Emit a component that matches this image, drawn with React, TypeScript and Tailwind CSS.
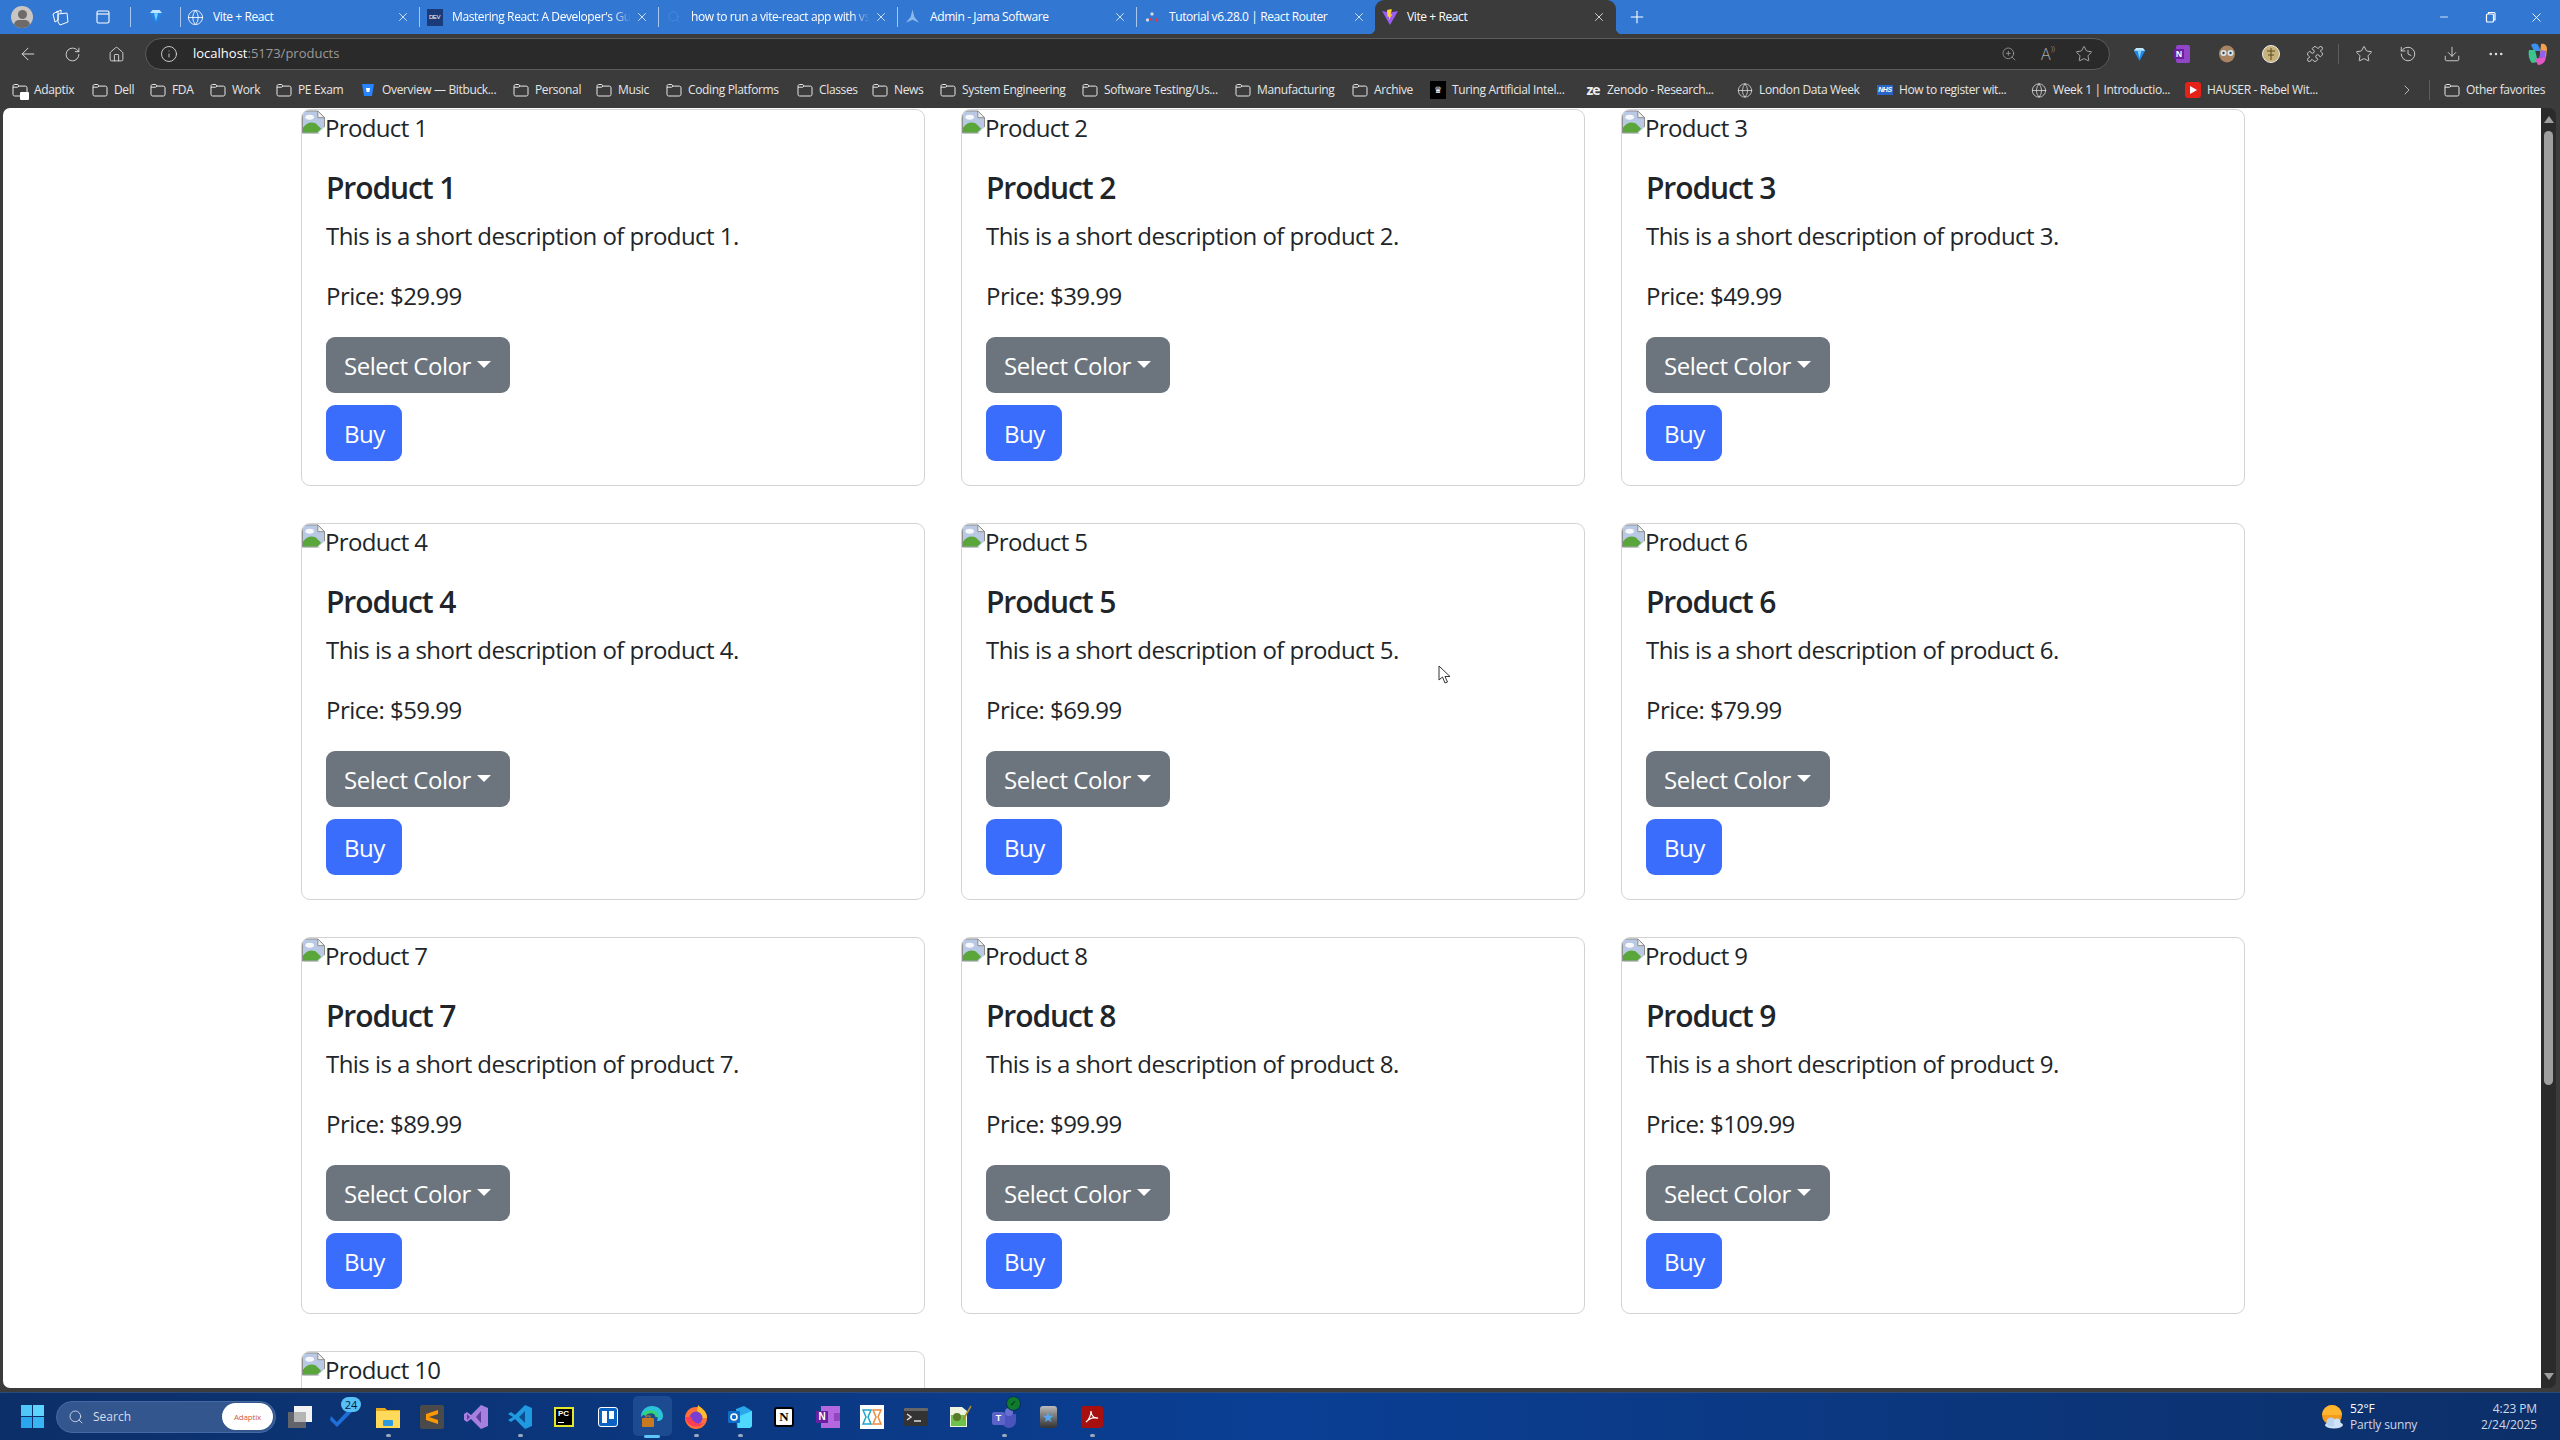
import React from "react";
import { ArrowLeft, RotateCw, Home, Info, ZoomIn, Star, Puzzle, History, Download, MoreHorizontal, ChevronRight, Plus, X, Minus, Search, Globe } from "lucide-react";

const Folder = ({ c = "#e8e8e8" }: { c?: string }) => (
  <svg width="16" height="16" viewBox="0 0 16 16" fill="none" stroke={c} strokeWidth="1"><path d="M1 4.2C1 3 1.8 2.5 2.8 2.5h3l1.4 1.6h6c1 0 1.8.6 1.8 1.6v6.8c0 1-.8 1.5-1.8 1.5H2.8c-1 0-1.8-.5-1.8-1.5z" /><path d="M1 5.2h4.6l1.6-1.1" /></svg>
);
const Pin = ({ s = 18 }: { s?: number }) => (
  <svg width={s} height={s} viewBox="0 0 18 18"><path d="M3 5l2.5-3h7L15 5l-6 11z" fill="#1f86e8" /><path d="M5.5 2h7L15 5H3z" fill="#bfe6ff" /><path d="M7 5.2h4L9 13z" fill="#7fd0ff" /></svg>
);
const Vite = () => (
  <svg width="18" height="18" viewBox="0 0 18 18"><path d="M1 3l8 1.4L17 3 9 17z" fill="#9a5cf5" /><path d="M10.5 1L6 2l.5 7 1.6-.4-.4 3.6 3.6-6-2 .4 1.4-4z" fill="#ffd02e" /></svg>
);

const tabs = [
  { t: "Vite + React", i: <Globe size={17} strokeWidth={1.2} color="#fff" />, fade: false },
  { t: "Mastering React: A Developer's Guide to Routing", i: <div className="w-[16px] h-[17px] bg-[#1b3a78] text-white text-[6px] flex items-center justify-center font-['Liberation_Sans',sans-serif]">DEV</div>, fade: true },
  { t: "how to run a vite-react app with vs code", i: <Search size={14} strokeWidth={1.2} color="#4d8fe0" />, fade: true },
  { t: "Admin - Jama Software", i: <svg width="18" height="18" viewBox="0 0 18 18"><path d="M9 1l2 8 5 6-7-3-7 3 5-6z" fill="#8db9ea" /></svg>, fade: false },
  { t: "Tutorial v6.28.0 | React Router", i: <svg width="16" height="16" viewBox="0 0 16 16"><circle cx="8" cy="5" r="1.7" fill="#d3d7de" /><circle cx="3.5" cy="11" r="1.7" fill="#d3d7de" /><circle cx="12.5" cy="11" r="1.7" fill="#e5383b" /><path d="M6 9.5l2 2" stroke="#e5383b" strokeWidth="1.8" /></svg>, fade: false },
];

const bookmarks = [
  { t: "Adaptix", w: "w-[80px]", i: <span className="relative block w-[16px] h-[16px]"><Folder /><span className="absolute -right-[1px] -bottom-[2px] w-[9px] h-[8px] bg-white rounded-[1px]" /></span> },
  { t: "Dell", w: "w-[58px]", i: <Folder /> },
  { t: "FDA", w: "w-[60px]", i: <Folder /> },
  { t: "Work", w: "w-[66px]", i: <Folder /> },
  { t: "PE Exam", w: "w-[84px]", i: <Folder /> },
  { t: "Overview — Bitbuck...", w: "w-[153px]", i: <svg width="14" height="16" viewBox="0 0 14 16"><path d="M1 2h12l-2 12H3z" fill="#2684ff" /><path d="M5 6h4l-.6 4H5.6z" fill="#fff" /></svg> },
  { t: "Personal", w: "w-[83px]", i: <Folder /> },
  { t: "Music", w: "w-[70px]", i: <Folder /> },
  { t: "Coding Platforms", w: "w-[131px]", i: <Folder /> },
  { t: "Classes", w: "w-[75px]", i: <Folder /> },
  { t: "News", w: "w-[68px]", i: <Folder /> },
  { t: "System Engineering", w: "w-[142px]", i: <Folder /> },
  { t: "Software Testing/Us...", w: "w-[153px]", i: <Folder /> },
  { t: "Manufacturing", w: "w-[117px]", i: <Folder /> },
  { t: "Archive", w: "w-[78px]", i: <Folder /> },
  { t: "Turing Artificial Intel...", w: "w-[155px]", i: <div className="w-[16px] h-[18px] bg-black flex items-center justify-center text-white text-[9px]">♛</div> },
  { t: "Zenodo - Research...", w: "w-[152px]", i: <span className="text-[#eee] text-[14px] font-bold tracking-[-1px] leading-none">ze</span> },
  { t: "London Data Week", w: "w-[140px]", i: <Globe size={17} strokeWidth={1.1} color="#e8e8e8" /> },
  { t: "How to register wit...", w: "w-[154px]", i: <div className="w-[16px] h-[10px] bg-[#2a66c8] text-white italic font-bold text-[7px] leading-[10px] text-center font-['Liberation_Sans',sans-serif]">NHS</div> },
  { t: "Week 1 | Introductio...", w: "w-[154px]", i: <Globe size={17} strokeWidth={1.1} color="#e8e8e8" /> },
  { t: "HAUSER - Rebel Wit...", w: "w-[160px]", i: <div className="w-[16px] h-[16px] rounded-[3px] bg-[#e62117] flex items-center justify-center"><svg width="7" height="8" viewBox="0 0 7 8"><path d="M0 0l7 4-7 4z" fill="#fff" /></svg></div> },
];

const Tile = ({ children }: { children: React.ReactNode }) => <div className="relative w-[44px] h-[48px] flex items-center justify-center shrink-0">{children}</div>;
const Dot = () => <span className="absolute bottom-[4px] left-[20px] w-[5px] h-[3px] rounded-full bg-[#9aa7bd]" />;

const taskIcons: React.ReactNode[] = [
  <Tile key="tv"><svg width="26" height="24" viewBox="0 0 26 24"><rect x="7" y="1" width="18" height="16" fill="#f2f2f2" /><rect x="1" y="7" width="18" height="16" fill="#6a6a6a" opacity=".9" /><rect x="7" y="7" width="12" height="10" fill="#b5b5b5" /></svg></Tile>,
  <Tile key="chk"><svg width="22" height="20" viewBox="0 0 22 20" className="absolute left-[8px] top-[14px]"><path d="M1 9l6 6L18 3l4 2L7 20 0 13z" fill="#1f6fd6" /></svg><div className="absolute left-[19px] top-[4px] w-[20px] h-[15px] rounded-[8px] bg-[#58c0f5] text-[#0a1c3a] text-[11px] leading-[15px] text-center font-['Open_Sans',sans-serif]">24</div></Tile>,
  <Tile key="fold"><svg width="24" height="22" viewBox="0 0 24 22"><path d="M0 2h9l2 2h13v18H0z" fill="#e8a91e" /><path d="M0 5h24v17H0z" fill="#ffd95a" /><rect x="7" y="14" width="10" height="6" rx="1" fill="#2a9be0" /></svg><Dot /></Tile>,
  <Tile key="sub"><div className="w-[24px] h-[24px] bg-[#4a4a4a] rounded-[2px] flex items-center justify-center"><svg width="14" height="16" viewBox="0 0 14 16"><path d="M1 5l12-4v4L1 9zM1 7l12 4v4L1 11z" fill="#ff9800" /></svg></div></Tile>,
  <Tile key="vs"><svg width="24" height="24" viewBox="0 0 24 24"><path d="M17 0l7 3v18l-7 3L7 14l-4 3-3-2V9l3-2 4 3z" fill="#a77fe0" /><path d="M17 6l-5 6 5 6zM3 9v6l3-3z" fill="#5e3f9a" /></svg></Tile>,
  <Tile key="code"><svg width="24" height="24" viewBox="0 0 24 24"><path d="M17 0l7 3v18l-7 3L7 14l-4 3-3-2 5-3-5-3 3-2 4 3z" fill="#1f9ae0" /><path d="M17 6l-6 6 6 6z" fill="#0c4f93" /></svg><Dot /></Tile>,
  <Tile key="pc"><div className="w-[20px] h-[20px] bg-black border-[2px] border-[#e5e82a] relative text-white text-[8px] leading-[10px] pl-[2px] font-bold font-['Liberation_Sans',sans-serif]">PC<span className="absolute left-[2px] bottom-[2px] w-[6px] h-[1px] bg-white" /></div></Tile>,
  <Tile key="tr"><div className="w-[20px] h-[20px] rounded-[3px] border border-white bg-[#0a62c4] flex gap-[2px] p-[3px]"><span className="w-[5px] h-[12px] bg-white" /><span className="w-[5px] h-[8px] bg-white" /></div></Tile>,
  <Tile key="edge"><div className="absolute left-[3px] top-[3px] w-[39px] h-[40px] rounded-[5px] bg-[#1d4b92]" /><svg width="24" height="24" viewBox="0 0 24 24" className="relative"><path d="M1 12C1 5 6 1 12 1s11 4 11 10c0 3-2 5-6 5 2-5-1-9-6-9S4 9 1 12z" fill="#2bc3d8" /><path d="M4 10c3-4 12-5 13 2" fill="none" stroke="#35d26f" strokeWidth="3" /><rect x="2" y="13" width="12" height="9" rx="1" fill="#c97a1e" /><rect x="6" y="11" width="4" height="3" fill="none" stroke="#c97a1e" /></svg><span className="absolute bottom-[3px] left-[14px] w-[16px] h-[3px] rounded-full bg-[#5fc5f5]" /></Tile>,
  <Tile key="ff"><svg width="24" height="24" viewBox="0 0 24 24"><circle cx="12" cy="13" r="11" fill="#ff7139" /><path d="M14 0c3 3 9 6 9 13h-6c0-4-2-5-4-7z" fill="#ffbd2e" /><circle cx="12" cy="13" r="6.5" fill="#7a3fd0" /><path d="M1 12c2 9 12 13 19 6-5 2-11 0-13-6z" fill="#ff3d55" /></svg><Dot /></Tile>,
  <Tile key="ol"><svg width="24" height="24" viewBox="0 0 24 24"><path d="M8 4l8-3 8 5v15l-2 2H9z" fill="#28a8ea" /><path d="M9 12l15-6v15l-2 2H10z" fill="#50d9ff" /><rect x="0" y="6" width="12" height="12" rx="1" fill="#0f6cc9" /><circle cx="6" cy="12" r="3" fill="none" stroke="#fff" strokeWidth="1.6" /></svg><Dot /></Tile>,
  <Tile key="n"><div className="w-[20px] h-[20px] rounded-[3px] bg-white border-[2px] border-black text-black text-[13px] leading-[16px] text-center font-bold font-['Liberation_Serif',serif]">N</div></Tile>,
  <Tile key="on"><div className="relative w-[24px] h-[22px]"><div className="absolute right-0 top-0 w-[19px] h-[22px] bg-[#b468e0]" /><div className="absolute right-0 top-[7px] w-[6px] h-[8px] bg-[#9346c0]" /><div className="absolute left-0 top-[5px] w-[12px] h-[12px] bg-[#6a1fa0] text-white text-[10px] leading-[12px] text-center font-bold font-['Liberation_Sans',sans-serif]">N</div></div></Tile>,
  <Tile key="zm"><div className="w-[24px] h-[24px] bg-white flex items-center justify-center"><svg width="20" height="18" viewBox="0 0 20 18" fill="none" strokeWidth="1.5"><path d="M1 2h8l-3 7 3 7H1l3-7z" stroke="#1ea7c7" /><path d="M19 2h-8l3 7-3 7h8l-3-7z" stroke="#f08a3c" /></svg></div></Tile>,
  <Tile key="term"><div className="w-[24px] h-[18px] bg-[#333] rounded-[1px] border-t-[3px] border-[#666] relative"><svg width="24" height="14" viewBox="0 0 24 14" className="absolute top-0 left-0" fill="none" stroke="#ddd" strokeWidth="1.5"><path d="M3 3l4 3-4 3M10 10h7" /></svg></div></Tile>,
  <Tile key="npp"><svg width="24" height="24" viewBox="0 0 24 24"><path d="M2 2h12l5 4v16H2z" fill="#eef3e0" /><rect x="3" y="10" width="15" height="11" fill="#6cc24a" /><circle cx="9" cy="12" r="4" fill="#5a7a2a" /><path d="M23 1L15 15" stroke="#b08a2a" strokeWidth="1.6" /></svg></Tile>,
  <Tile key="teams"><div className="relative w-[24px] h-[24px]"><div className="absolute right-0 top-[9px] w-[14px] h-[14px] rounded-b-[7px] bg-[#4b53bc]" /><div className="absolute right-[3px] top-[3px] w-[8px] h-[8px] rounded-full bg-[#6871d0]" /><div className="absolute left-0 top-[7px] w-[13px] h-[13px] rounded-[2px] bg-[#5b62c8] text-white text-[9px] leading-[13px] text-center font-bold font-['Liberation_Sans',sans-serif]">T</div></div><div className="absolute left-[24px] top-[3px] w-[15px] h-[15px] rounded-full bg-[#0f7b2c] border border-[#062a5c] flex items-center justify-center text-[#0a0f0a] text-[8px]">✓</div><Dot /></Tile>,
  <Tile key="star"><div className="w-[17px] h-[22px] rounded-[3px] bg-gradient-to-b from-[#bcbcbc] to-[#333] flex items-center justify-center text-[#56a8f0] text-[14px] leading-none">★</div></Tile>,
  <Tile key="pdf"><div className="w-[22px] h-[22px] rounded-[3px] bg-[#a80f0f] flex items-center justify-center"><svg width="14" height="14" viewBox="0 0 14 14" fill="none" stroke="#fff" strokeWidth="1.2"><path d="M1 12c3-2 5-7 5-11 0 4 3 8 7 7-4-1-9 1-12 4z" /></svg></div><Dot /></Tile>,
];

const names = ["1", "2", "3", "4", "5", "6", "7", "8", "9", "10"];
const prices = ["$29.99", "$39.99", "$49.99", "$59.99", "$69.99", "$79.99", "$89.99", "$99.99", "$109.99", ""];

const Broken = () => (
  <svg width="23" height="24" viewBox="0 0 24 24" className="shrink-0">
    <path d="M.5.5h16l7 7v11l-5 5H.5z" fill="#b9c9e4" stroke="#8a8a8a" />
    <path d="M16.500.5v7h7z" fill="#f2f2f2" stroke="#8a8a8a" />
    <ellipse cx="8" cy="7" rx="4.500" ry="2.600" fill="#f6f8fc" />
    <path d="M1 23v-5c4-6 11-7 15-3l4 4-4 4z" fill="#5aa63a" />
    <path d="M16 24l8-7v7z" fill="#fff" />
  </svg>
);

const Card = ({ n, p }: { n: string; p: string }) => (
  <div className="h-[377px] border border-[#d3d3d3] rounded-[9px] bg-white text-[#212529] overflow-hidden">
    <div className="flex h-[36px] text-[24px] leading-[36px] tracking-[-0.65px]">
      <Broken />
      <span>Product {n}</span>
    </div>
    <div className="p-[24px]">
      <h5 className="text-[30px] leading-[36px] font-semibold mb-[12px] tracking-[-1.1px]">Product {n}</h5>
      <p className="text-[24px] leading-[36px] mb-[24px] tracking-[-0.55px]">This is a short description of product {n}.</p>
      <p className="text-[24px] leading-[36px] mb-[23px] tracking-[-0.55px]">Price: {p}</p>
      <div className="flex items-center w-[184px] h-[56px] rounded-[9px] bg-[#6c757d] text-white text-[24px] pl-[18px] pt-[1px] tracking-[-0.45px] mb-[12px]">
        Select Color
        <span className="ml-[6px] -mt-[2px] w-0 h-0 border-x-[7px] border-x-transparent border-t-[7px] border-t-white" />
      </div>
      <div className="flex items-center w-[76px] h-[56px] rounded-[9px] bg-[#3b6dfd] text-white text-[24px] pl-[18px] pt-[1px] tracking-[-0.45px]">Buy</div>
    </div>
  </div>
);

export default function App() {
  return (
    <div className="relative w-[2560px] h-[1440px] overflow-hidden flex flex-col bg-[#3b3b3b] font-['Open_Sans','Noto_Sans',sans-serif]">
      {/* title bar */}
      <div className="h-[34px] bg-[#3277d2] flex items-center text-white text-[12px] tracking-[-0.4px] shrink-0">
        <div className="w-[44px] flex justify-center"><div className="w-[22px] h-[22px] rounded-full bg-[#c9c5c2] overflow-hidden relative"><span className="absolute left-[7px] top-[4px] w-[9px] h-[9px] rounded-full bg-[#6d6a68]" /><span className="absolute left-[3px] top-[14px] w-[16px] h-[10px] rounded-full bg-[#6d6a68]" /></div></div>
        <div className="w-[32px] flex justify-center"><svg width="17" height="17" viewBox="0 0 17 17" fill="none" stroke="#fff" strokeWidth="1"><path d="M1 5l5-3v9l-3 2zM4 3.5l5-2.5 0 3M6 5l9-1 1 9-8 3-2-3z" /></svg></div>
        <div className="w-[54px] flex justify-center"><svg width="14" height="14" viewBox="0 0 14 14" fill="none" stroke="#fff" strokeWidth="1.1"><rect x="1" y="1" width="12" height="12" rx="1.5" /><path d="M1 4h12" /></svg></div>
        <div className="w-[1px] h-[20px] bg-[#a9c6ee]" />
        <div className="w-[49px] flex justify-center"><Pin /></div>
        <div className="flex">
          {tabs.map((t) => (
            <div key={t.t} className="w-[239px] h-[20px] border-l border-[#a9c6ee] flex items-center pl-[6px] pr-[9px]">
              <div className="w-[17px] flex justify-center shrink-0">{t.i}</div>
              <div className={t.fade ? "ml-[9px] flex-1 overflow-hidden whitespace-nowrap [mask-image:linear-gradient(to_right,black_90%,transparent)]" : "ml-[9px] flex-1 overflow-hidden whitespace-nowrap"}>{t.t}</div>
              <X size={14} strokeWidth={1.3} className="ml-[4px] shrink-0" />
            </div>
          ))}
        </div>
        <div className="relative w-[241px] h-[34px] mt-[0px] bg-[#3b3b3b] rounded-t-[9px] flex items-center pl-[6px] pr-[10px] self-end">
          <span className="absolute -left-[6px] bottom-0 w-[6px] h-[6px] bg-[radial-gradient(circle_at_0_0,transparent_6px,#3b3b3b_6.5px)]" />
          <span className="absolute -right-[6px] bottom-0 w-[6px] h-[6px] bg-[radial-gradient(circle_at_100%_0,transparent_6px,#3b3b3b_6.5px)]" />
          <div className="w-[18px] flex justify-center shrink-0"><Vite /></div>
          <div className="ml-[8px] flex-1 whitespace-nowrap">Vite + React</div>
          <X size={14} strokeWidth={1.3} className="shrink-0" />
        </div>
        <div className="w-[40px] ml-[1px] flex justify-center"><Plus size={20} strokeWidth={1.3} /></div>
        <div className="flex-1" />
        <div className="flex items-center pr-[16px]">
          <Minus size={12} strokeWidth={1.6} />
          <svg width="12" height="12" viewBox="0 0 12 12" fill="none" stroke="#fff" strokeWidth="1.2" className="ml-[34px]"><rect x="2.500" y="3" width="7" height="8" rx="1" /><path d="M4.500 3V1.500h5.500a1 1 0 0 1 1 1V9H9.500" /></svg>
          <X size={15} strokeWidth={1.4} className="ml-[33px]" />
        </div>
      </div>

      {/* toolbar */}
      <div className="h-[36px] flex items-center text-[#e6e6e6] shrink-0 pl-[6px] pt-[4px]">
        <div className="w-[44px] flex justify-center"><ArrowLeft size={20} strokeWidth={1.1} /></div>
        <div className="w-[44px] flex justify-center"><RotateCw size={17} strokeWidth={1.2} /></div>
        <div className="w-[44px] flex justify-center"><Home size={17} strokeWidth={1.2} /></div>
        <div className="ml-[7px] w-[1965px] h-[32px] rounded-[16px] bg-[#2a2a2a] border border-[#5c5c5c] flex items-center pl-[14px] pr-[16px] text-[13px]">
          <Info size={18} strokeWidth={1.1} />
          <span className="ml-[15px] text-white">localhost</span>
          <span className="text-[#9a9a9a]">:5173/products</span>
          <div className="flex-1" />
          <ZoomIn size={16} strokeWidth={1.1} className="text-[#aaa]" />
          <span className="ml-[24px] text-[16px] text-[#aaa] font-light">A<span className="text-[8px] align-top">))</span></span>
          <Star size={18} strokeWidth={1.1} className="ml-[20px] text-[#bbb]" />
        </div>
        <div className="ml-[7px] w-[44px] flex justify-center"><Pin s={17} /></div>
        <div className="w-[44px] flex justify-center"><div className="relative w-[14px] h-[18px] rounded-[2px] bg-[#9146c8]"><span className="absolute -left-[2px] top-[4px] w-[10px] h-[10px] bg-[#6a1fa0] text-white text-[8px] leading-[10px] text-center font-bold">N</span></div></div>
        <div className="w-[44px] flex justify-center"><svg width="18" height="18" viewBox="0 0 18 18"><ellipse cx="9" cy="9" rx="8" ry="8.500" fill="#a88462" /><circle cx="5.500" cy="8" r="3" fill="#d6e6ee" /><circle cx="12.500" cy="8" r="3" fill="#d6e6ee" /><circle cx="5.500" cy="8" r="1.200" fill="#345" /><circle cx="12.500" cy="8" r="1.200" fill="#345" /></svg></div>
        <div className="w-[44px] flex justify-center"><svg width="18" height="18" viewBox="0 0 18 18"><circle cx="9" cy="9" r="8.500" fill="#c7b27a" stroke="#eee" /><path d="M9 3v12M5 6h8M6 10h6" stroke="#5a4a22" /></svg></div>
        <div className="w-[44px] flex justify-center"><Puzzle size={18} strokeWidth={1.1} /></div>
        <div className="mx-[1px] w-[1px] h-[20px] bg-[#5c5c5c]" />
        <div className="ml-[2px] w-[44px] flex justify-center"><Star size={18} strokeWidth={1.1} /></div>
        <div className="w-[44px] flex justify-center"><History size={18} strokeWidth={1.1} /></div>
        <div className="w-[44px] flex justify-center"><Download size={18} strokeWidth={1.1} /></div>
        <div className="w-[44px] flex justify-center"><MoreHorizontal size={18} strokeWidth={1.4} /></div>
        <div className="w-[40px] flex justify-center"><svg width="22" height="24" viewBox="0 0 22 24"><path d="M4 3c2-2 6-2 7 0l3 6H7z" fill="#3a8ff0" /><path d="M14 2c3-1 6 1 6 5l-1 8-6-2z" fill="#f0a050" /><path d="M2 8c-1 4 0 10 3 13l6-1-3-12z" fill="#3bc48d" /><path d="M8 17l11-3c0 5-3 9-8 9z" fill="#e058c0" /><path d="M14 8l5 1-1 6-6 1z" fill="#9060f0" /></svg></div>
      </div>

      {/* bookmarks */}
      <div className="h-[38px] flex items-center pl-[12px] pt-[2px] text-[12px] tracking-[-0.35px] text-[#e6e6e6] shrink-0 whitespace-nowrap">
        {bookmarks.map((b) => (
          <div key={b.t} className={`${b.w} flex items-center shrink-0`}>
            <div className="w-[16px] flex justify-center shrink-0">{b.i}</div>
            <span className="ml-[6px]">{b.t}</span>
          </div>
        ))}
        <div className="w-[73px] flex justify-end pr-[3px]"><ChevronRight size={16} strokeWidth={1.1} /></div>
        <div className="ml-[11px] w-[1px] h-[20px] bg-[#5c5c5c]" />
        <div className="ml-[14px] flex items-center"><Folder /><span className="ml-[6px]">Other favorites</span></div>
      </div>

      {/* page */}
      <div className="ml-[3px] mr-[4px] h-[1280px] rounded-[7px] overflow-hidden flex shrink-0">
        <div className="w-[2538px] bg-white overflow-hidden pl-[298px] pt-[1px]">
          <div className="grid grid-cols-[repeat(3,624px)] gap-x-[36px] gap-y-[37px] w-[1944px]">
            {names.map((n, i) => <Card key={n} n={n} p={prices[i]} />)}
          </div>
        </div>
        <div className="flex-1 bg-[#2b2b2b] flex flex-col items-center pt-[8px]">
          <span className="w-0 h-0 border-x-[5px] border-x-transparent border-b-[7px] border-b-[#9f9f9f]" />
          <div className="w-[9px] h-[954px] mt-[8px] rounded-full bg-[#9f9f9f]" />
          <div className="flex-1" />
          <span className="mb-[8px] w-0 h-0 border-x-[5px] border-x-transparent border-t-[7px] border-t-[#9f9f9f]" />
        </div>
      </div>

      {/* taskbar */}
      <div className="mt-[4px] h-[48px] shrink-0 bg-gradient-to-r from-[#0c2f68] via-[#0a3f95] to-[#0c2f68] border-t border-[#2a4a7c] flex items-center text-white">
        <div className="ml-[10px] w-[44px] flex justify-center">
          <div className="grid grid-cols-2 gap-[1px] w-[23px] h-[23px]">
            <span className="bg-[#4fc8f8]" /><span className="bg-[#5ed3fb]" /><span className="bg-[#2aa6ee]" /><span className="bg-[#38b4f2]" />
          </div>
        </div>
        <div className="ml-[2px] w-[220px] h-[32px] rounded-[16px] bg-[#33568e] border border-[#456aa3] flex items-center pl-[11px] text-[12px] text-[#d5deec]">
          <Search size={16} strokeWidth={1.3} />
          <span className="ml-[9px]">Search</span>
          <div className="ml-auto mr-[2px] w-[51px] h-[27px] rounded-[14px] bg-white flex items-center justify-center text-[8px] tracking-[-0.2px] text-[#d2603a]">Adaptix</div>
        </div>
        <div className="ml-[2px] flex">{taskIcons}</div>
        <div className="flex-1" />
        <svg width="24" height="24" viewBox="0 0 24 24"><circle cx="12" cy="10" r="10" fill="#f49b1c" /><path d="M2 10a10 10 0 0 1 20 0z" fill="#ffb52e" /><ellipse cx="14" cy="20" rx="9" ry="3.500" fill="#cfe2f7" /><circle cx="11" cy="17" r="4.500" fill="#b8d4f2" /><circle cx="17" cy="17" r="3.500" fill="#cfe2f7" /></svg>
        <div className="ml-[6px] w-[106px] text-[12px] leading-[16px] tracking-[-0.15px]">
          <div>52°F</div>
          <div className="text-[#cfd8e6]">Partly sunny</div>
        </div>
        <div className="w-[81px] text-right text-[12px] leading-[16px] tracking-[-0.1px] text-[#cfd8e6] mr-[23px]">
          <div>4:23 PM</div>
          <div>2/24/2025</div>
        </div>
      </div>

      {/* mouse cursor */}
      <svg width="13" height="19" viewBox="0 0 13 19" className="absolute left-[1438px] top-[665px]"><path d="M1 1v14l3.500-3 2.500 6 2.500-1-2.500-5.500H12z" fill="#fff" stroke="#333" strokeWidth="1" /></svg>
    </div>
  );
}
